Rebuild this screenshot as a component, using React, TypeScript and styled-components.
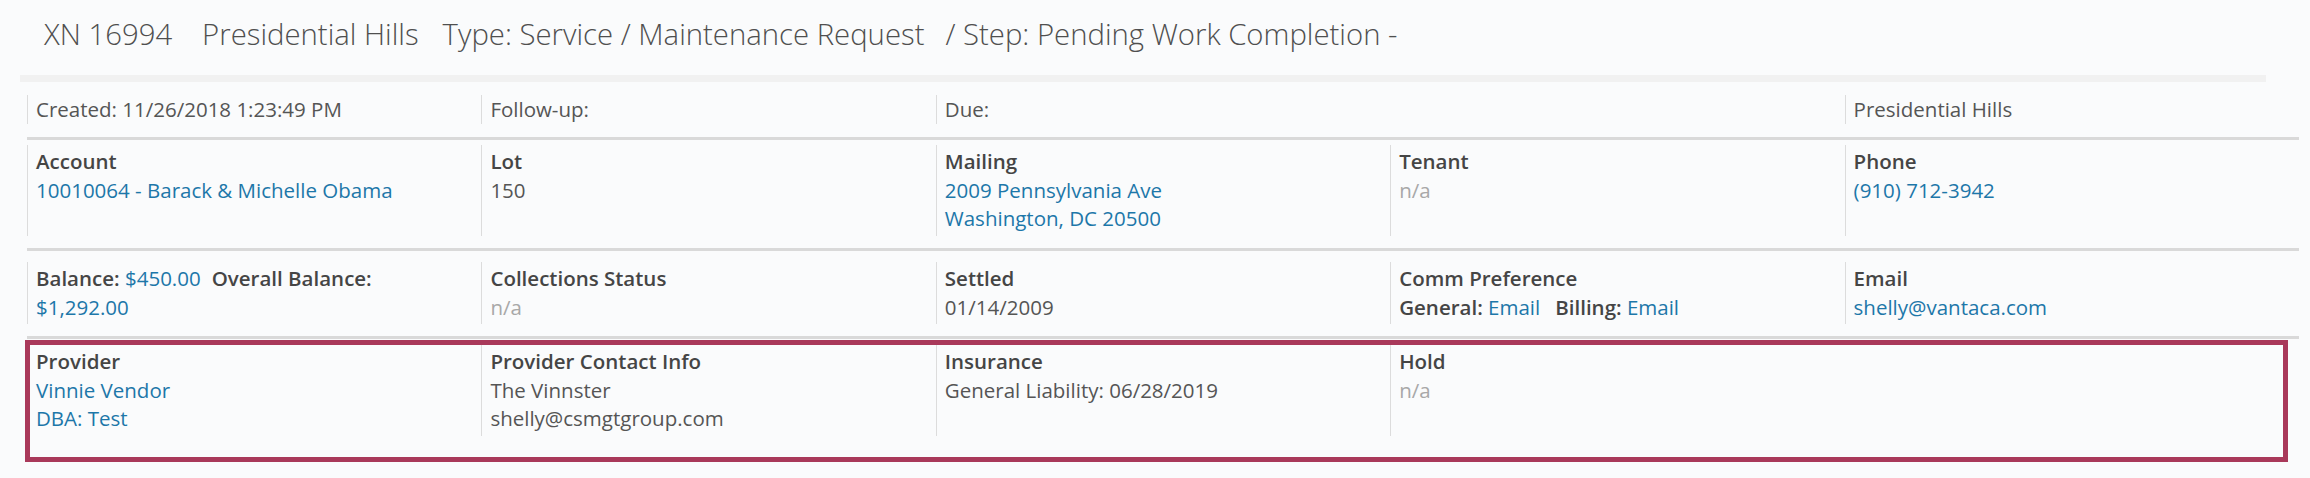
import React from 'react'
import styled, { createGlobalStyle } from 'styled-components'

const GlobalStyle = createGlobalStyle`
  body {
    margin: 0;
    background: #fafbfc;
    font-family: 'Open Sans', 'Liberation Sans', sans-serif;
    color: #555;
  }
`

const Page = styled.div`
  padding-top: 14px;
  width: 2310px;
`

const Title = styled.h1`
  display: flex;
  margin: 0 0 0 44px;
  font-size: 29.3px;
  font-weight: 300;
  line-height: 40px;
  color: #4f4f4f;
  white-space: nowrap;
`

const TitlePart = styled.span<{ $space?: number }>`
  margin-left: ${(p) => p.$space ?? 0}px;
`

const Band = styled.div`
  margin: 21px 0 0 20px;
  width: 2246px;
  height: 7px;
  background: #f1f1f1;
`

const Panel = styled.section`
  margin-left: 27px;
  width: 2272px;
`

const Row = styled.div<{ $pt: number; $pb: number; $last?: boolean }>`
  position: relative;
  display: grid;
  grid-template-columns: repeat(5, 1fr);
  padding: ${(p) => p.$pt}px 0 ${(p) => p.$pb}px;
  border-bottom: ${(p) => (p.$last ? 'none' : '3px solid #d9d9d9')};
`

// red focus frame drawn over the provider row
const HighlightRow = styled(Row)`
  &::after {
    content: '';
    position: absolute;
    top: 1px;
    left: -2px;
    right: 11px;
    bottom: 0;
    border: 5px solid #a9395a;
    pointer-events: none;
  }
`

const Cell = styled.div<{ $span?: number; $bare?: boolean; $compact?: boolean }>`
  grid-column: span ${(p) => p.$span ?? 1};
  border-left: 1px solid ${(p) => (p.$bare ? 'transparent' : '#dcdcdc')};
  padding: ${(p) => (p.$compact ? '0 8px' : '2px 8px 3px')};
  font-size: 20.5px;
  line-height: 28.5px;
  color: #555;
  min-width: 0;
`

const Label = styled.div`
  font-weight: 600;
  color: #454545;
`

const InlineLabel = styled.span<{ $space?: number }>`
  font-weight: 600;
  color: #454545;
  margin-left: ${(p) => p.$space ?? 0}px;
`

const Line = styled.div``

const Link = styled.a`
  color: #1d77a9;
  text-decoration: none;
  cursor: pointer;
`

const Muted = styled.div`
  color: #a8a8a8;
`

export default function App() {
  return (
    <Page>
      <GlobalStyle />
      <Title>
        <TitlePart>XN 16994</TitlePart>
        <TitlePart $space={30}>Presidential Hills</TitlePart>
        <TitlePart $space={24}>Type: Service / Maintenance Request</TitlePart>
        <TitlePart $space={21}>/ Step: Pending Work Completion -</TitlePart>
      </Title>

      <Band />

      <Panel>
        <Row $pt={13} $pb={13.5}>
          <Cell $compact>Created: 11/26/2018 1:23:49 PM</Cell>
          <Cell $compact>Follow-up:</Cell>
          <Cell $compact $span={2}>
            Due:
          </Cell>
          <Cell $compact>Presidential Hills</Cell>
        </Row>

        <Row $pt={5} $pb={12.5}>
          <Cell>
            <Label>Account</Label>
            <Link>10010064 - Barack &amp; Michelle Obama</Link>
          </Cell>
          <Cell>
            <Label>Lot</Label>
            <Line>150</Line>
          </Cell>
          <Cell>
            <Label>Mailing</Label>
            <Line>
              <Link>2009 Pennsylvania Ave</Link>
            </Line>
            <Line>
              <Link>Washington, DC 20500</Link>
            </Line>
          </Cell>
          <Cell>
            <Label>Tenant</Label>
            <Muted>n/a</Muted>
          </Cell>
          <Cell>
            <Label>Phone</Label>
            <Link>(910) 712-3942</Link>
          </Cell>
        </Row>

        <Row $pt={11} $pb={12}>
          <Cell>
            <Line>
              <InlineLabel>Balance:</InlineLabel> <Link>$450.00</Link>
              <InlineLabel $space={11}>Overall Balance:</InlineLabel>
            </Line>
            <Line>
              <Link>$1,292.00</Link>
            </Line>
          </Cell>
          <Cell>
            <Label>Collections Status</Label>
            <Muted>n/a</Muted>
          </Cell>
          <Cell>
            <Label>Settled</Label>
            <Line>01/14/2009</Line>
          </Cell>
          <Cell>
            <Label>Comm Preference</Label>
            <Line>
              <InlineLabel>General:</InlineLabel> <Link>Email</Link>
              <InlineLabel $space={15}>Billing:</InlineLabel> <Link>Email</Link>
            </Line>
          </Cell>
          <Cell>
            <Label>Email</Label>
            <Link>shelly@vantaca.com</Link>
          </Cell>
        </Row>

        <HighlightRow $pt={6} $pb={26.5} $last>
          <Cell>
            <Label>Provider</Label>
            <Line>
              <Link>Vinnie Vendor</Link>
            </Line>
            <Line>
              <Link>DBA: Test</Link>
            </Line>
          </Cell>
          <Cell>
            <Label>Provider Contact Info</Label>
            <Line>The Vinnster</Line>
            <Line>shelly@csmgtgroup.com</Line>
          </Cell>
          <Cell>
            <Label>Insurance</Label>
            <Line>General Liability: 06/28/2019</Line>
          </Cell>
          <Cell>
            <Label>Hold</Label>
            <Muted>n/a</Muted>
          </Cell>
          <Cell $bare />
        </HighlightRow>
      </Panel>
    </Page>
  )
}
